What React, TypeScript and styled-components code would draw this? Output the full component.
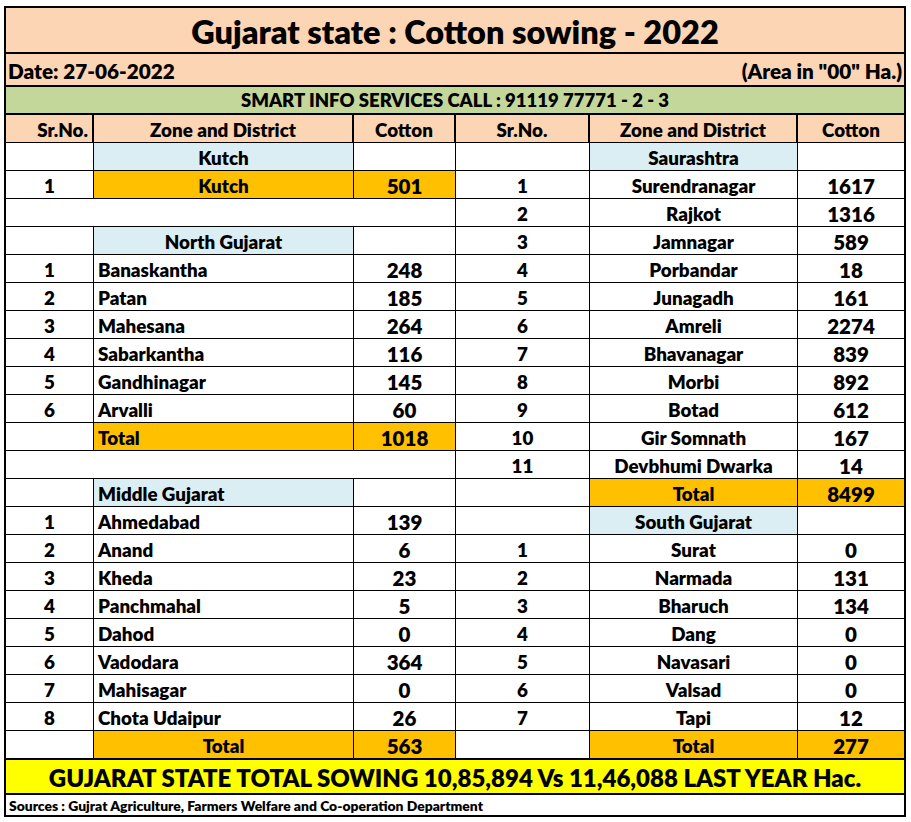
import React from "react";
import styled, { createGlobalStyle, css } from "styled-components";

const Global = createGlobalStyle`
  html, body { margin: 0; padding: 0; background: #ffffff; }
  body { font-family: Lato, "Open Sans", sans-serif; font-weight: 800; color: #000; }
  * { box-sizing: border-box; }
`;

const Page = styled.div`
  padding: 6px 0 0 4px;
  width: 911px;
  height: 822px;
`;

const Frame = styled.div`
  width: 902px;
  border: 2px solid #000;
  display: flex;
  flex-direction: column;
`;

const TitleRow = styled.div`
  height: 46px;
  background: #fcd5b4;
  border-bottom: 2px solid #000;
  display: flex;
  align-items: center;
  justify-content: center;
  font-size: 32.5px;
  padding-top: 2px;
`;

const DateRow = styled.div`
  height: 33px;
  background: #fcd5b4;
  border-bottom: 2px solid #000;
  display: flex;
  align-items: center;
  justify-content: space-between;
  padding: 2px 2px 0 2px;
  font-size: 20.7px;
`;

const InfoRow = styled.div`
  height: 28px;
  background: #c4d79b;
  border-bottom: 2px solid #000;
  display: flex;
  align-items: center;
  justify-content: center;
  font-size: 18.5px;
`;

const Grid = styled.div`
  display: grid;
  grid-template-columns: 88px 260px 102px 134px 208px 106px;
  grid-auto-rows: 28px;
`;

type Align = "left" | "center" | "right";
type Fill = "white" | "peach" | "blue" | "orange";

const fills: Record<Fill, string> = {
  white: "#ffffff",
  peach: "#fcd5b4",
  blue: "#daeef3",
  orange: "#ffc000",
};

const Cell = styled.div<{
  $align?: Align;
  $fill?: Fill;
  $span?: number;
  $big?: boolean;
  $last?: boolean;
  $head?: boolean;
}>`
  display: flex;
  align-items: center;
  justify-content: ${(p) =>
    p.$align === "left" ? "flex-start" : p.$align === "right" ? "flex-end" : "center"};
  padding: 2px 4px 0 4px;
  background: ${(p) => fills[p.$fill || "white"]};
  font-size: ${(p) => (p.$big ? "20.5px" : "18.8px")};
  border-bottom: 1px solid #000;
  border-right: ${(p) => (p.$last ? "none" : "1px solid #000")};
  ${(p) => p.$span && css`grid-column: span ${p.$span};`}
  ${(p) =>
    p.$head &&
    css`
      background: #fcd5b4;
      border-bottom: 2px solid #000;
      border-right: ${p.$last ? "none" : "2px solid #000"};
      height: 29px;
    `}
  white-space: nowrap;
`;

const TotalRow = styled.div`
  height: 36px;
  background: #ffff00;
  border-top: 1px solid #000;
  border-bottom: 2px solid #000;
  display: flex;
  align-items: center;
  justify-content: center;
  font-size: 24px;
  padding-top: 2px;
`;

const SourceRow = styled.div`
  height: 20px;
  display: flex;
  align-items: center;
  padding: 1px 3px 0 3px;
  font-size: 13.9px;
`;

type Side =
  | { kind: "empty" }
  | { kind: "zone"; name: string; align: Align }
  | { kind: "row"; no: number | string; name: string; value: string; align: Align; fill?: Fill }
  | { kind: "total"; value: string; align: Align };

const z = (name: string, align: Align = "center"): Side => ({ kind: "zone", name, align });
const r = (no: number, name: string, value: string, align: Align = "left"): Side => ({
  kind: "row",
  no,
  name,
  value,
  align,
});
const t = (value: string, align: Align = "center"): Side => ({ kind: "total", value, align });
const e: Side = { kind: "empty" };

const left: Side[] = [
  z("Kutch"),
  { kind: "row", no: 1, name: "Kutch", value: "501", align: "center", fill: "orange" },
  e,
  z("North Gujarat"),
  r(1, "Banaskantha", "248"),
  r(2, "Patan", "185"),
  r(3, "Mahesana", "264"),
  r(4, "Sabarkantha", "116"),
  r(5, "Gandhinagar", "145"),
  r(6, "Arvalli", "60"),
  t("1018", "left"),
  e,
  z("Middle Gujarat", "left"),
  r(1, "Ahmedabad", "139"),
  r(2, "Anand", "6"),
  r(3, "Kheda", "23"),
  r(4, "Panchmahal", "5"),
  r(5, "Dahod", "0"),
  r(6, "Vadodara", "364"),
  r(7, "Mahisagar", "0"),
  r(8, "Chota Udaipur", "26"),
  t("563"),
];

const right: Side[] = [
  z("Saurashtra"),
  r(1, "Surendranagar", "1617", "center"),
  r(2, "Rajkot", "1316", "center"),
  r(3, "Jamnagar", "589", "center"),
  r(4, "Porbandar", "18", "center"),
  r(5, "Junagadh", "161", "center"),
  r(6, "Amreli", "2274", "center"),
  r(7, "Bhavanagar", "839", "center"),
  r(8, "Morbi", "892", "center"),
  r(9, "Botad", "612", "center"),
  r(10, "Gir Somnath", "167", "center"),
  r(11, "Devbhumi Dwarka", "14", "center"),
  t("8499"),
  z("South Gujarat"),
  r(1, "Surat", "0", "center"),
  r(2, "Narmada", "131", "center"),
  r(3, "Bharuch", "134", "center"),
  r(4, "Dang", "0", "center"),
  r(5, "Navasari", "0", "center"),
  r(6, "Valsad", "0", "center"),
  r(7, "Tapi", "12", "center"),
  t("277"),
];

function renderSide(s: Side, key: string, last: boolean) {
  switch (s.kind) {
    case "empty":
      return <Cell key={key} $span={3} $last={last} />;
    case "zone":
      return (
        <React.Fragment key={key}>
          <Cell />
          <Cell $fill="blue" $align={s.align}>
            {s.name}
          </Cell>
          <Cell $last={last} />
        </React.Fragment>
      );
    case "row":
      return (
        <React.Fragment key={key}>
          <Cell>{s.no}</Cell>
          <Cell $fill={s.fill} $align={s.align}>
            {s.name}
          </Cell>
          <Cell $fill={s.fill} $big $last={last}>
            {s.value}
          </Cell>
        </React.Fragment>
      );
    case "total":
      return (
        <React.Fragment key={key}>
          <Cell />
          <Cell $fill="orange" $align={s.align}>
            Total
          </Cell>
          <Cell $fill="orange" $big $last={last}>
            {s.value}
          </Cell>
        </React.Fragment>
      );
  }
}

export default function App() {
  return (
    <>
      <Global />
      <Page>
        <Frame>
          <TitleRow>Gujarat state : Cotton sowing - 2022</TitleRow>
          <DateRow>
            <span>Date: 27-06-2022</span>
            <span>(Area in "00" Ha.)</span>
          </DateRow>
          <InfoRow>SMART INFO SERVICES CALL : 91119 77771 - 2 - 3</InfoRow>
          <Grid>
            <Cell $head $align="right">Sr.No.</Cell>
            <Cell $head>Zone and District</Cell>
            <Cell $head>Cotton</Cell>
            <Cell $head>Sr.No.</Cell>
            <Cell $head>Zone and District</Cell>
            <Cell $head $last>Cotton</Cell>
            {left.map((l, i) => (
              <React.Fragment key={i}>
                {renderSide(l, "l" + i, false)}
                {renderSide(right[i], "r" + i, true)}
              </React.Fragment>
            ))}
          </Grid>
          <TotalRow>GUJARAT STATE TOTAL SOWING 10,85,894 Vs 11,46,088 LAST YEAR Hac.</TotalRow>
          <SourceRow>Sources : Gujrat Agriculture, Farmers Welfare and Co-operation Department</SourceRow>
        </Frame>
      </Page>
    </>
  );
}
